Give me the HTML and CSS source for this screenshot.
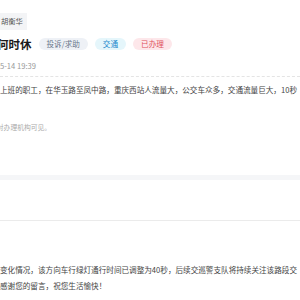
FILE: index.html
```html
<!DOCTYPE html>
<html lang="zh-CN">
<head>
  <meta charset="UTF-8">
  <meta name="viewport" content="width=device-width, initial-scale=1.0">
  <title>留言详情</title>
  <link rel="stylesheet" href="styles.css">
</head>
<body>
  <div class="page">
    <div class="detail">
      <div class="detail-head">
        <div class="author"><span class="author-tag">胡衡华</span></div>
        <div class="title-row">
          <h1>何时休</h1>
          <span class="tag tag-type">投诉/求助</span>
          <span class="tag tag-field">交通</span>
          <span class="tag tag-done">已办理</span>
        </div>
        <div class="date">5-14 19:39</div>
      </div>
      <p class="content">上班的职工，在华玉路至凤中路，重庆西站人流量大，公交车众多，交通流量巨大，10秒</p>
      <p class="note">仅对办理机构可见。</p>
    </div>

    <div class="band"></div>

    <div class="reply">
      <div class="reply-head"></div>
      <p class="reply-text">变化情况，该方向车行绿灯通行时间已调整为40秒，后续交巡警支队将持续关注该路段交</p>
      <p class="reply-text">感谢您的留言，祝您生活愉快！</p>
    </div>
  </div>
</body>
</html>
```

FILE: styles.css
```css
body {
  margin: 0;
  padding: 0;
  background: #fff;
  font-family: "Noto Sans CJK SC", "Noto Sans", sans-serif;
  color: #444;
}
.page {
  width: 300px;
  height: 300px;
  overflow: hidden;
}
p {
  margin: 0;
}
.detail-head {
  padding-top: 13px;
  padding-bottom: 5px;
  border-bottom: 1px dashed #e4e4e4;
}
.author {
  display: flex;
}
.author-tag {
  height: 17px;
  line-height: 17px;
  padding: 0 4px 0 1px;
  font-size: 7.3px;
  color: #555;
  background: #f3f4f6;
}
.title-row {
  display: flex;
  align-items: center;
  gap: 7px;
  height: 14px;
  margin-top: 7px;
}
.title-row h1 {
  margin: 0 0 0 -3px;
  font-size: 11.5px;
  line-height: 14px;
  font-weight: 700;
  color: #1a1a1a;
  white-space: nowrap;
}
.tag {
  height: 12px;
  line-height: 12px;
  padding: 0 8px;
  border-radius: 6px;
  font-size: 7.6px;
  white-space: nowrap;
}
.tag-type {
  background: #eef1f6;
  color: #6b788c;
}
.tag-field {
  background: #e5f6fb;
  color: #2289cc;
}
.tag-done {
  background: #fde7ea;
  color: #e0505c;
}
.date {
  margin-top: 10px;
  font-size: 7.6px;
  line-height: 10px;
  color: #999;
}
.content {
  margin-top: 7px;
  font-size: 7.6px;
  line-height: 12px;
  white-space: nowrap;
  color: #444;
}
.note {
  margin-top: 26px;
  margin-left: -10px;
  font-size: 6.8px;
  line-height: 10px;
  color: #aaa;
  white-space: nowrap;
}
.band {
  height: 5px;
  margin-top: 43px;
  background: #f5f6f8;
}
.reply-head {
  height: 40px;
  border-bottom: 1px solid #ebebeb;
}
.reply-head + .reply-text {
  margin-top: 41px;
}
.reply-text {
  font-size: 7.6px;
  line-height: 16px;
  white-space: nowrap;
  color: #444;
}
```
